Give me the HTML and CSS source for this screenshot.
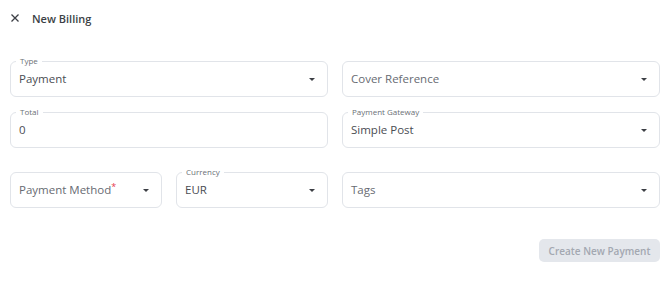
FILE: index.html
```html
<!DOCTYPE html>
<html lang="en">

<head>
    <meta charset="UTF-8">
    <meta name="viewport" content="width=device-width, initial-scale=1.0">
    <title>New Billing</title>
    <link rel="stylesheet" href="styles.css">
</head>

<body>
    <header class="dialog-header">
        <svg class="close-icon" width="10" height="10" viewBox="0 0 10 10">
            <path d="M1.5 1.5 L8.5 8.5 M8.5 1.5 L1.5 8.5" stroke="#3c3f45" stroke-width="1.3" fill="none"/>
        </svg>
        <h1>New Billing</h1>
    </header>
    <main class="billing-form">
        <div class="field half">
            <span class="field-label">Type</span>
            <span class="field-value">Payment</span>
            <span class="caret"></span>
        </div>
        <div class="field half">
            <span class="field-value placeholder">Cover Reference</span>
            <span class="caret"></span>
        </div>
        <div class="field half">
            <span class="field-label">Total</span>
            <span class="field-value">0</span>
        </div>
        <div class="field half">
            <span class="field-label">Payment Gateway</span>
            <span class="field-value">Simple Post</span>
            <span class="caret"></span>
        </div>
        <div class="field spaced">
            <span class="field-value placeholder">Payment Method<sup class="required">*</sup></span>
            <span class="caret"></span>
        </div>
        <div class="field spaced">
            <span class="field-label">Currency</span>
            <span class="field-value">EUR</span>
            <span class="caret"></span>
        </div>
        <div class="field half spaced">
            <span class="field-value placeholder">Tags</span>
            <span class="caret"></span>
        </div>
    </main>
    <div class="actions">
        <button class="create-btn" disabled>Create New Payment</button>
    </div>
</body>

</html>
```

FILE: styles.css
```css
body {
    font-family: "Open Sans", sans-serif;
    background-color: #ffffff;
    color: #3c3f45;
    margin: 0;
    padding: 0 10px;
}

.dialog-header {
    display: flex;
    align-items: center;
    height: 36px;
    gap: 12px;
}

.dialog-header h1 {
    font-size: 11px;
    font-weight: 600;
    margin: 0;
    color: #3c3f45;
}

.billing-form {
    display: grid;
    grid-template-columns: repeat(4, 1fr);
    column-gap: 14px;
    row-gap: 15px;
    margin-top: 25px;
}

.field {
    position: relative;
    height: 36px;
    border: 1px solid #e1e4e9;
    border-radius: 6px;
    box-sizing: border-box;
    display: flex;
    align-items: center;
    padding: 0 9px 0 8px;
}

.half {
    grid-column: span 2;
}

.spaced {
    margin-top: 9px;
}

.field-label {
    position: absolute;
    top: -6px;
    left: 5px;
    padding: 0 4px;
    background-color: #ffffff;
    font-size: 8px;
    line-height: 10px;
    color: #6b6f76;
}

.field-value {
    font-size: 11.5px;
    color: #4a4d53;
    flex: 1;
    margin-top: -2px;
}

.placeholder {
    color: #676b72;
}

.required {
    color: #e53950;
    font-size: 9px;
    vertical-align: 4px;
    line-height: 0;
}

.caret {
    width: 0;
    height: 0;
    border-left: 3px solid transparent;
    border-right: 3px solid transparent;
    border-top: 3.5px solid #3c3f45;
    margin-right: 3px;
}

.actions {
    display: flex;
    justify-content: flex-end;
    margin-top: 31px;
}

.create-btn {
    font-family: "Open Sans", sans-serif;
    font-size: 10px;
    font-weight: 600;
    background-color: #e4e7ec;
    color: #a3a8b1;
    border: none;
    border-radius: 5px;
    width: 121px;
    height: 23px;
    padding: 0;
}
```
